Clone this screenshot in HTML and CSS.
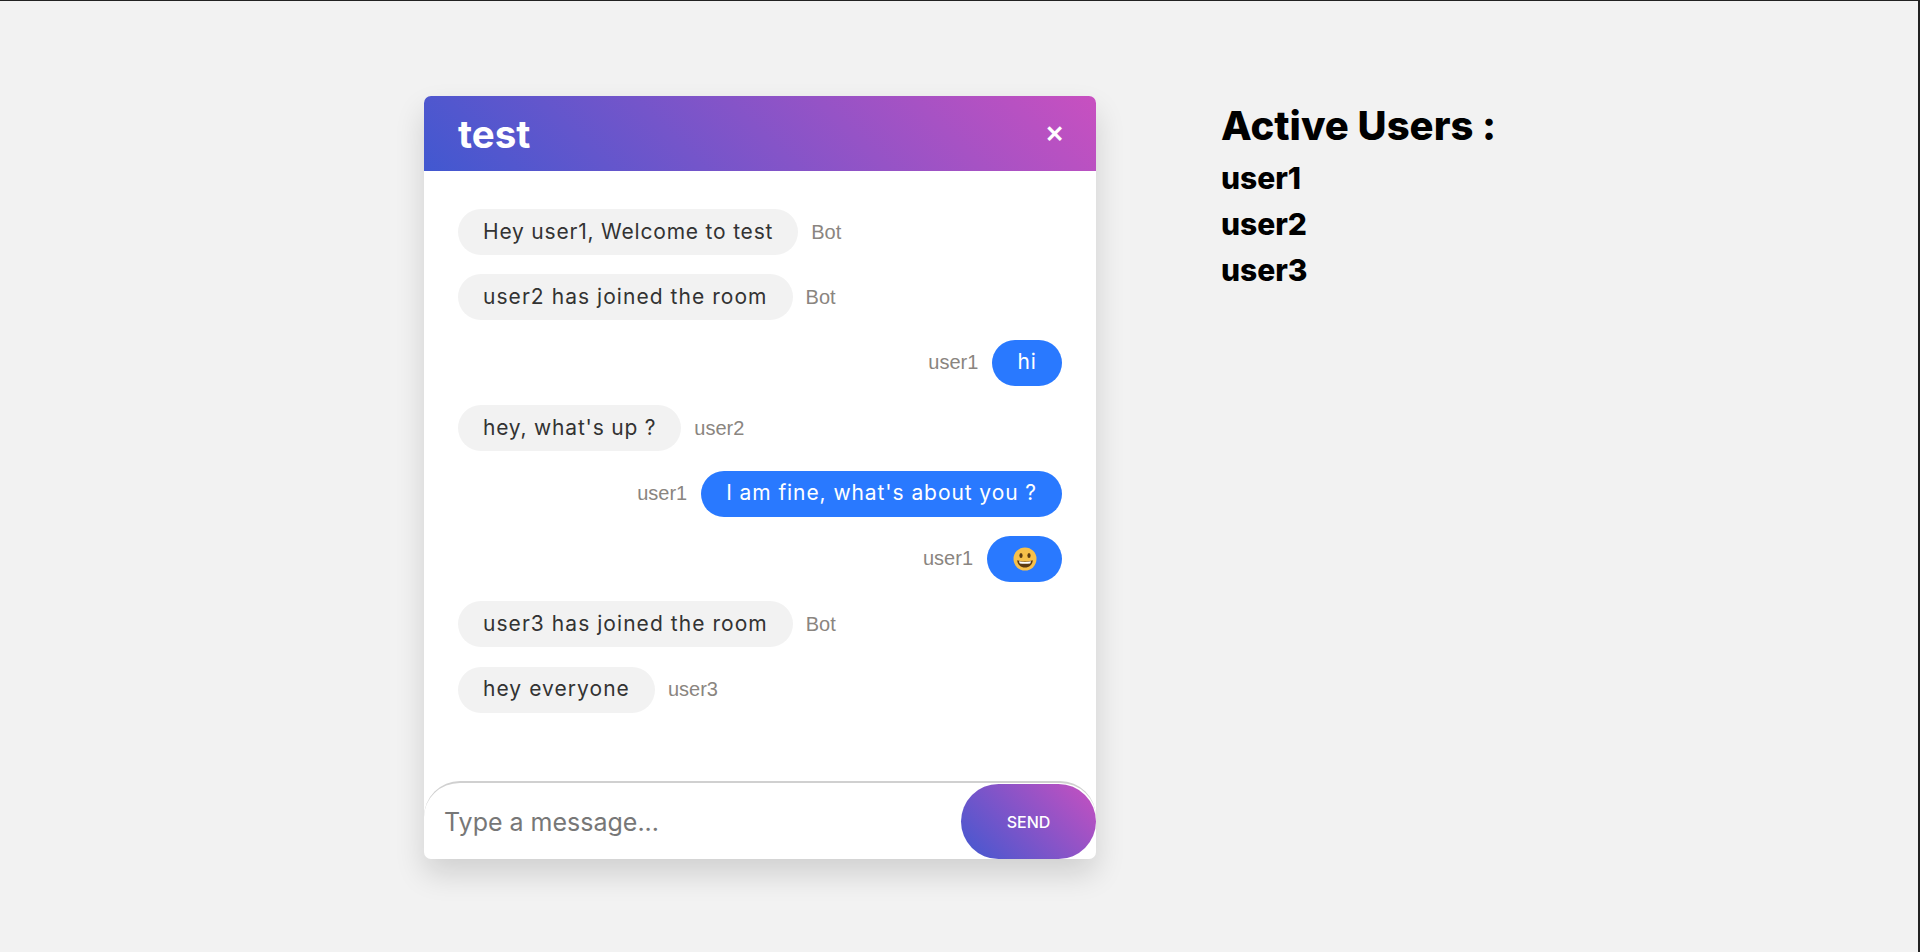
FILE: index.html
```html
<!DOCTYPE html>
<html lang="en">
<head>
<meta charset="utf-8">
<title>test</title>
<link rel="stylesheet" href="styles.css">
</head>
<body>
<div class="page">
  <section class="chat">
    <header class="chat-head">
      <h1 class="room">test</h1>
      <span class="close">&#10005;</span>
    </header>
    <div class="messages">
      <div class="row"><div class="bubble snug">Hey user1, Welcome to test</div><span class="meta">Bot</span></div>
      <div class="row"><div class="bubble">user2 has joined the room</div><span class="meta">Bot</span></div>
      <div class="row mine"><span class="meta">user1</span><div class="bubble">hi</div></div>
      <div class="row"><div class="bubble snug">hey, what's up ?</div><span class="meta">user2</span></div>
      <div class="row mine"><span class="meta">user1</span><div class="bubble mid">I am fine, what's about you ?</div></div>
      <div class="row mine"><span class="meta">user1</span><div class="bubble emoji-bubble">
        <svg class="emoji" viewBox="0 0 24 24" role="img" aria-label="smiling face">
          <circle cx="12" cy="12" r="11.5" fill="#f7c04a"/>
          <ellipse cx="8" cy="8.5" rx="1.6" ry="2.6" fill="#5b3a12"/>
          <ellipse cx="16" cy="8.5" rx="1.6" ry="2.6" fill="#5b3a12"/>
          <path d="M4.2 13.2c2.6.9 5 1.2 7.8 1.2s5.2-.3 7.8-1.2c-.3 4.600-3.600 7.300-7.800 7.300s-7.500-2.700-7.800-7.300z" fill="#5b3a12"/>
          <path d="M6 14.300c2 .4 4 .6 6 .6s4-.2 6-.6c-.2 1-.5 1.600-.8 2.100-1.700.3-3.400.4-5.200.4s-3.500-.1-5.200-.4c-.3-.5-.6-1.100-.8-2.100z" fill="#fff"/>
        </svg>
      </div></div>
      <div class="row"><div class="bubble">user3 has joined the room</div><span class="meta">Bot</span></div>
      <div class="row"><div class="bubble">hey everyone</div><span class="meta">user3</span></div>
    </div>
    <form class="composer">
      <input class="field" type="text" placeholder="Type a message...">
      <button class="send" type="button">SEND</button>
    </form>
  </section>
  <aside class="users">
    <h2 class="users-title">Active Users :</h2>
    <div class="user">user1</div>
    <div class="user">user2</div>
    <div class="user">user3</div>
  </aside>
</div>
</body>
</html>
```
FILE: styles.css
```css
* { box-sizing: border-box; }
html, body { margin: 0; height: 100%; }
body {
  background: #f2f2f2;
  font-family: "Inter", "Liberation Sans", sans-serif;
  border-top: 1px solid #222;
  border-right: 2px solid #222;
  overflow: hidden;
}
.page {
  display: flex;
  align-items: flex-start;
  gap: 125px;
  padding: 95px 0 0 424px;
}
.chat {
  width: 672px;
  height: 763px;
  background: #fff;
  border-radius: 7px;
  box-shadow: 0 15px 30px rgba(0, 0, 0, 0.14);
  display: flex;
  flex-direction: column;
  overflow: hidden;
}
.chat-head {
  height: 75px;
  flex: none;
  display: flex;
  align-items: center;
  justify-content: space-between;
  padding: 0 32px 0 34px;
  background: linear-gradient(45deg, #4158d0 0%, #c850c0 100%);
  color: #fff;
}
.room { margin: 0; font-size: 38.5px; font-weight: 700; }
.close { font-size: 23px; font-weight: 700; }
.messages {
  flex: 1;
  display: flex;
  flex-direction: column;
  gap: 19.4px;
  padding: 38px 34px 0;
}
.row { display: flex; align-items: center; gap: 13px; }
.row.mine { justify-content: flex-end; gap: 14px; }
.bubble {
  height: 46px;
  display: flex;
  align-items: center;
  padding: 0 25px 2px;
  border-radius: 23px;
  background: #f2f2f2;
  color: #333;
  font-size: 21px;
  letter-spacing: 1.05px;
}
.bubble.snug { letter-spacing: 0.8px; }
.bubble.mid { letter-spacing: 0.92px; }
.mine .bubble { background: #2979ff; color: #fff; }
.meta { font-family: "Liberation Sans", sans-serif; font-size: 20px; color: #8a8580; }
.mine .emoji-bubble { padding: 1px 25.5px 0; }
.emoji { width: 24px; height: 24px; display: block; }
.composer {
  height: 78px;
  flex: none;
  display: flex;
  align-items: flex-end;
  border-top: 2px solid #d0d0d0;
  border-radius: 36px 36px 0 0;
}
.field {
  flex: 1;
  min-width: 0;
  height: 75px;
  border: 0;
  outline: 0;
  padding: 0 0 0 20px;
  background: transparent;
  font: 25px "Inter", sans-serif;
}
.field::placeholder { color: #777; }
.send {
  width: 135px;
  height: 75px;
  border: 0;
  border-radius: 38px;
  background: linear-gradient(45deg, #4158d0 0%, #c850c0 100%);
  color: #fff;
  font: 500 16px "Inter", sans-serif;
}
.users { padding-top: 4px; color: #000; }
.users-title { margin: 0 0 3px; font-size: 40px; line-height: 52px; font-weight: 800; }
.user { font-size: 30px; line-height: 46px; font-weight: 800; }
```
